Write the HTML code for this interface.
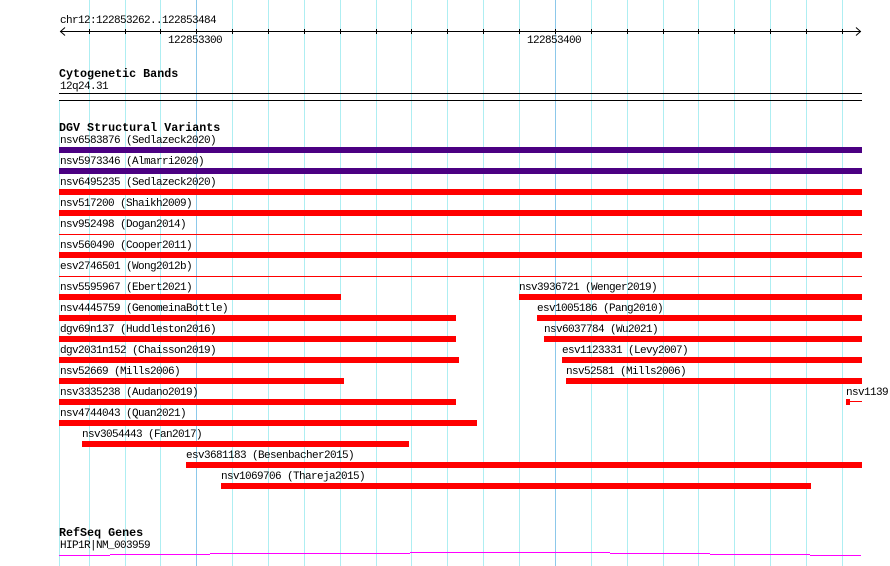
<!DOCTYPE html>
<html><head><meta charset="utf-8"><style>
body{margin:0;width:890px;height:566px;background:#fff;position:relative;overflow:hidden;font-family:"Liberation Mono","DejaVu Sans Mono",monospace;font-size:10px;color:#000}
.v{position:absolute;top:0;width:1px;height:566px;background:#aeeef2}
.t{position:absolute;white-space:pre;line-height:11px;font-size:11px;letter-spacing:-0.6px;margin-top:1px}
.b{position:absolute;font-weight:bold;font-size:11.7px;line-height:12px;white-space:pre}
.r{position:absolute;height:6px;background:#ff0000}
.p{position:absolute;height:6px;background:#4b0082}
.h{position:absolute;height:1px;background:#ff0000}
.k{position:absolute;height:1px;background:#000}
.tk{position:absolute;top:29px;width:1px;height:5px;background:#000}
.m{position:absolute;height:1px;background:#ff00ff}
</style></head><body>
<div class="v" style="left:59px;top:100px;height:466px"></div>
<div class="v" style="left:89px"></div><div class="v" style="left:125px"></div><div class="v" style="left:160px"></div><div class="v" style="left:196px;background:#8cc8ea"></div><div class="v" style="left:232px"></div><div class="v" style="left:268px"></div><div class="v" style="left:304px"></div><div class="v" style="left:340px"></div><div class="v" style="left:376px"></div><div class="v" style="left:411px"></div><div class="v" style="left:447px"></div><div class="v" style="left:483px"></div><div class="v" style="left:519px"></div><div class="v" style="left:555px;background:#8cc8ea"></div><div class="v" style="left:591px"></div><div class="v" style="left:627px"></div><div class="v" style="left:663px"></div><div class="v" style="left:698px"></div><div class="v" style="left:734px"></div><div class="v" style="left:770px"></div><div class="v" style="left:806px"></div><div class="v" style="left:842px"></div>

<div class="t" style="left:60px;top:15px">chr12:122853262..122853484</div>
<div class="k" style="left:60px;top:31px;width:801px"></div>
<svg style="position:absolute;left:59px;top:27px" width="805" height="9"><path d="M6 0.5 L1.5 4.5 L6 8.5" fill="none" stroke="#000"/><path d="M797 0.5 L801.5 4.5 L797 8.5" fill="none" stroke="#000"/></svg>
<div class="tk" style="left:89px"></div><div class="tk" style="left:125px"></div><div class="tk" style="left:160px"></div><div class="tk" style="left:196px"></div><div class="tk" style="left:232px"></div><div class="tk" style="left:268px"></div><div class="tk" style="left:304px"></div><div class="tk" style="left:340px"></div><div class="tk" style="left:376px"></div><div class="tk" style="left:411px"></div><div class="tk" style="left:447px"></div><div class="tk" style="left:483px"></div><div class="tk" style="left:519px"></div><div class="tk" style="left:555px"></div><div class="tk" style="left:591px"></div><div class="tk" style="left:627px"></div><div class="tk" style="left:663px"></div><div class="tk" style="left:698px"></div><div class="tk" style="left:734px"></div><div class="tk" style="left:770px"></div><div class="tk" style="left:806px"></div><div class="tk" style="left:842px"></div>
<div class="t" style="left:168px;top:35px">122853300</div>
<div class="t" style="left:527px;top:35px">122853400</div>

<div class="b" style="left:59px;top:68px">Cytogenetic Bands</div>
<div class="t" style="left:60px;top:81px">12q24.31</div>
<div class="k" style="left:59px;top:93px;width:803px"></div>
<div class="k" style="left:59px;top:100px;width:803px"></div>

<div class="b" style="left:59px;top:122px">DGV Structural Variants</div>

<div class="t" style="left:60px;top:135px">nsv6583876 (Sedlazeck2020)</div><div class="p" style="left:59px;top:147px;width:803px"></div>
<div class="t" style="left:60px;top:156px">nsv5973346 (Almarri2020)</div><div class="p" style="left:59px;top:168px;width:803px"></div>
<div class="t" style="left:60px;top:177px">nsv6495235 (Sedlazeck2020)</div><div class="r" style="left:59px;top:189px;width:803px"></div>
<div class="t" style="left:60px;top:198px">nsv517200 (Shaikh2009)</div><div class="r" style="left:59px;top:210px;width:803px"></div>
<div class="t" style="left:60px;top:219px">nsv952498 (Dogan2014)</div><div class="h" style="left:59px;top:234px;width:803px"></div>
<div class="t" style="left:60px;top:240px">nsv560490 (Cooper2011)</div><div class="r" style="left:59px;top:252px;width:803px"></div>
<div class="t" style="left:60px;top:261px">esv2746501 (Wong2012b)</div><div class="h" style="left:59px;top:276px;width:803px"></div>

<div class="t" style="left:60px;top:282px">nsv5595967 (Ebert2021)</div><div class="r" style="left:59px;top:294px;width:282px"></div>
<div class="t" style="left:519px;top:282px">nsv3936721 (Wenger2019)</div><div class="r" style="left:519px;top:294px;width:343px"></div>
<div class="t" style="left:60px;top:303px">nsv4445759 (GenomeinaBottle)</div><div class="r" style="left:59px;top:315px;width:397px"></div>
<div class="t" style="left:537px;top:303px">esv1005186 (Pang2010)</div><div class="r" style="left:537px;top:315px;width:325px"></div>
<div class="t" style="left:60px;top:324px">dgv69n137 (Huddleston2016)</div><div class="r" style="left:59px;top:336px;width:397px"></div>
<div class="t" style="left:544px;top:324px">nsv6037784 (Wu2021)</div><div class="r" style="left:544px;top:336px;width:318px"></div>
<div class="t" style="left:60px;top:345px">dgv2031n152 (Chaisson2019)</div><div class="r" style="left:59px;top:357px;width:400px"></div>
<div class="t" style="left:562px;top:345px">esv1123331 (Levy2007)</div><div class="r" style="left:562px;top:357px;width:300px"></div>
<div class="t" style="left:60px;top:366px">nsv52669 (Mills2006)</div><div class="r" style="left:59px;top:378px;width:285px"></div>
<div class="t" style="left:566px;top:366px">nsv52581 (Mills2006)</div><div class="r" style="left:566px;top:378px;width:296px"></div>
<div class="t" style="left:60px;top:387px">nsv3335238 (Audano2019)</div><div class="r" style="left:59px;top:399px;width:397px"></div>
<div class="t" style="left:846px;top:387px">nsv1139</div><div class="r" style="left:846px;top:399px;width:4px"></div><div class="h" style="left:850px;top:401px;width:12px"></div>
<div class="t" style="left:60px;top:408px">nsv4744043 (Quan2021)</div><div class="r" style="left:59px;top:420px;width:418px"></div>
<div class="t" style="left:82px;top:429px">nsv3054443 (Fan2017)</div><div class="r" style="left:82px;top:441px;width:327px"></div>
<div class="t" style="left:186px;top:450px">esv3681183 (Besenbacher2015)</div><div class="r" style="left:186px;top:462px;width:676px"></div>
<div class="t" style="left:221px;top:471px">nsv1069706 (Thareja2015)</div><div class="r" style="left:221px;top:483px;width:590px"></div>

<div class="b" style="left:59px;top:527px">RefSeq Genes</div>
<div class="t" style="left:60px;top:540px">HIP1R|NM_003959</div>
<div class="m" style="left:59px;top:555px;width:51px"></div>
<div class="m" style="left:110px;top:554px;width:100px"></div>
<div class="m" style="left:210px;top:553px;width:200px"></div>
<div class="m" style="left:410px;top:552px;width:200px"></div>
<div class="m" style="left:610px;top:553px;width:100px"></div>
<div class="m" style="left:710px;top:554px;width:100px"></div>
<div class="m" style="left:810px;top:555px;width:51px"></div>
</body></html>
